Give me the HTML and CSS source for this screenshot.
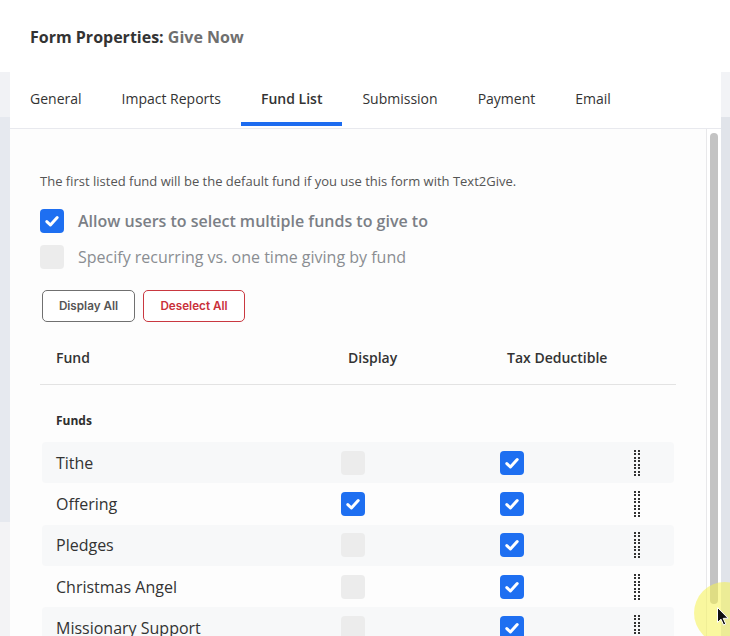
FILE: index.html
```html
<!DOCTYPE html>
<html lang="en">
<head>
<meta charset="utf-8">
<title>Form Properties: Give Now</title>
<link rel="stylesheet" href="styles.css">
</head>
<body>
<header class="header">
  <h1 class="title">Form Properties: <span class="title-name">Give Now</span></h1>
</header>
<div class="main">
  <div class="side side-left"></div>
  <section class="panel">
    <nav class="tabs">
      <span class="tab">General</span>
      <span class="tab">Impact Reports</span>
      <span class="tab tab-active">Fund List</span>
      <span class="tab">Submission</span>
      <span class="tab">Payment</span>
      <span class="tab">Email</span>
    </nav>
    <div class="body">
      <div class="content">
        <p class="intro">The first listed fund will be the default fund if you use this form with Text2Give.</p>
        <div class="options">
          <label class="option option-strong">
            <span class="cb cb-on"><svg viewBox="0 0 24 24" class="check"><path d="M6.8 12.6 L10.4 16 L17.2 8.6"/></svg></span>
            Allow users to select multiple funds to give to
          </label>
          <label class="option">
            <span class="cb"></span>
            Specify recurring vs. one time giving by fund
          </label>
        </div>
        <div class="buttons">
          <button class="btn">Display All</button>
          <button class="btn btn-danger">Deselect All</button>
        </div>
        <div class="table">
          <div class="thead">
            <span class="th th-first">Fund</span>
            <span class="th">Display</span>
            <span class="th">Tax Deductible</span>
            <span></span>
          </div>
          <div class="group">Funds</div>
          <div class="row row-alt">
            <span class="name">Tithe</span>
            <span class="cell"><span class="cb"></span></span>
            <span class="cell"><span class="cb cb-on"><svg viewBox="0 0 24 24" class="check"><path d="M6.8 12.6 L10.4 16 L17.2 8.6"/></svg></span></span>
            <span class="cell"><span class="grip"></span></span>
          </div>
          <div class="row">
            <span class="name">Offering</span>
            <span class="cell"><span class="cb cb-on"><svg viewBox="0 0 24 24" class="check"><path d="M6.8 12.6 L10.4 16 L17.2 8.6"/></svg></span></span>
            <span class="cell"><span class="cb cb-on"><svg viewBox="0 0 24 24" class="check"><path d="M6.8 12.6 L10.4 16 L17.2 8.6"/></svg></span></span>
            <span class="cell"><span class="grip"></span></span>
          </div>
          <div class="row row-alt">
            <span class="name">Pledges</span>
            <span class="cell"><span class="cb"></span></span>
            <span class="cell"><span class="cb cb-on"><svg viewBox="0 0 24 24" class="check"><path d="M6.8 12.6 L10.4 16 L17.2 8.6"/></svg></span></span>
            <span class="cell"><span class="grip"></span></span>
          </div>
          <div class="row">
            <span class="name">Christmas Angel</span>
            <span class="cell"><span class="cb"></span></span>
            <span class="cell"><span class="cb cb-on"><svg viewBox="0 0 24 24" class="check"><path d="M6.8 12.6 L10.4 16 L17.2 8.6"/></svg></span></span>
            <span class="cell"><span class="grip"></span></span>
          </div>
          <div class="row row-alt">
            <span class="name">Missionary Support</span>
            <span class="cell"><span class="cb"></span></span>
            <span class="cell"><span class="cb cb-on"><svg viewBox="0 0 24 24" class="check"><path d="M6.8 12.6 L10.4 16 L17.2 8.6"/></svg></span></span>
            <span class="cell"><span class="grip"></span></span>
          </div>
        </div>
      </div>
      <div class="scrolltrack"><div class="thumb"></div></div>
    </div>
  </section>
  <div class="side side-right"></div>
</div>
<div class="cursor-hl"></div>
<svg class="cursor" viewBox="0 0 12 19"><path d="M0.5 0.5 L0.5 15.5 L4 12.2 L6.6 18 L8.8 17 L6.2 11.4 L11 11.2 Z"/></svg>
</body>
</html>
```

FILE: styles.css
```css
* { box-sizing: border-box; }

html, body {
  margin: 0;
  padding: 0;
}

body {
  width: 730px;
  height: 636px;
  overflow: hidden;
  position: relative;
  font-family: "Open Sans", "Liberation Sans", sans-serif;
  color: #2e2e2e;
  background: #fff;
}

.header {
  height: 72px;
  background: #fff;
  padding-left: 30px;
  padding-top: 2px;
  display: flex;
  align-items: center;
}

.title {
  margin: 0;
  font-size: 16px;
  font-weight: 700;
  color: #333;
  line-height: 20px;
}

.title-name { color: #6f6f6f; }

.main {
  display: flex;
  height: 564px;
}

.side { flex: none; }

.side-left {
  width: 10px;
  background: linear-gradient(to bottom, #f1f2f5 0, #f1f2f5 45px, #e6e9ef 45px, #e6e9ef 450px, #f3f3f5 450px);
}

.side-right {
  width: 9px;
  background: linear-gradient(to bottom, #f2f3f6 0, #f2f3f6 45px, #e1e4ea 45px);
}

.panel {
  flex: 1;
  min-width: 0;
  background: #fff;
  display: flex;
  flex-direction: column;
}

.tabs {
  display: flex;
  height: 57px;
  border-bottom: 1px solid #e8e9ee;
  flex: none;
}

.tab {
  padding: 3px 20px 0;
  height: 54px;
  line-height: 47px;
  font-size: 14px;
  color: #333;
  border-bottom: 4px solid transparent;
  white-space: nowrap;
}

.tab-active {
  font-weight: 600;
  border-bottom-color: #1d6cf0;
}

.body {
  flex: 1;
  display: flex;
  min-height: 0;
}

.content {
  flex: 1;
  min-width: 0;
  border-right: 1px solid #e8e8ea;
  overflow: hidden;
  padding: 0 30px;
  background: #fdfdfd;
}

.scrolltrack {
  width: 14px;
  flex: none;
  background: #fff;
  padding: 4px 0 0 3px;
}

.thumb {
  width: 8px;
  height: 471px;
  border-radius: 4px;
  background: #c3c3c3;
}

.intro {
  margin: 43px 0 0;
  font-size: 13px;
  line-height: 18px;
  color: #555;
}

.options {
  margin-top: 19px;
  display: flex;
  flex-direction: column;
  gap: 12px;
}

.option {
  display: flex;
  align-items: center;
  gap: 14px;
  height: 24px;
  font-size: 16px;
  color: #8a8d92;
}

.option-strong {
  font-weight: 600;
  color: #7b7f86;
}

.cb {
  width: 24px;
  height: 24px;
  border-radius: 4px;
  background: #ececec;
  flex: none;
  display: inline-flex;
  align-items: center;
  justify-content: center;
}

.cb-on { background: #1e6ff1; }

.check {
  width: 24px;
  height: 24px;
  fill: none;
  stroke: #fff;
  stroke-width: 3;
  stroke-linecap: round;
  stroke-linejoin: round;
}

.buttons {
  margin-top: 21px;
  padding-left: 2px;
  display: flex;
  gap: 8px;
}

.btn {
  height: 32px;
  padding: 0 12px;
  border: 1px solid #707070;
  border-radius: 5px;
  background: #fff;
  font-family: Inter, "Liberation Sans", sans-serif;
  font-size: 11.7px;
  font-weight: 600;
  color: #555;
  cursor: pointer;
}

.btn:first-child { width: 93px; }

.btn-danger {
  width: 102px;
  border-color: #c93840;
  color: #c9303a;
}

.table { margin-top: 11px; }

.thead {
  display: grid;
  grid-template-columns: 301px 159px 134px 1fr;
  align-items: center;
  height: 52px;
  padding-bottom: 3px;
  border-bottom: 1px solid #e3e3e3;
}

.th {
  font-size: 14px;
  font-weight: 600;
  color: #333;
  padding-left: 7px;
}

.th-first { padding-left: 16px; }

.group {
  padding: 28px 16px 13px;
  font-size: 12px;
  line-height: 16px;
  font-weight: 700;
  color: #2e2e2e;
}

.row {
  display: grid;
  grid-template-columns: 299px 159px 134px 1fr;
  align-items: center;
  height: 41.3px;
  margin: 0 2px;
  border-radius: 4px;
}

.row-alt { background: #f7f8f9; }

.name {
  padding-left: 14px;
  font-size: 16px;
  color: #333;
  white-space: nowrap;
}

.cell {
  display: flex;
  align-items: center;
}

.grip {
  width: 6px;
  height: 26px;
  background: repeating-linear-gradient(to bottom, #333 0, #333 2px, transparent 2px, transparent 3.45px);
  -webkit-mask-image: repeating-linear-gradient(to right, #000 0, #000 2px, transparent 2px, transparent 4px);
  mask-image: repeating-linear-gradient(to right, #000 0, #000 2px, transparent 2px, transparent 4px);
}

.cursor-hl {
  position: absolute;
  left: 694px;
  top: 582px;
  width: 62px;
  height: 62px;
  border-radius: 50%;
  background: rgba(246, 242, 80, 0.55);
}

.cursor {
  position: absolute;
  left: 717px;
  top: 607px;
  width: 12px;
  height: 19px;
  fill: #111;
  stroke: #fff;
  stroke-width: 1;
}
```
